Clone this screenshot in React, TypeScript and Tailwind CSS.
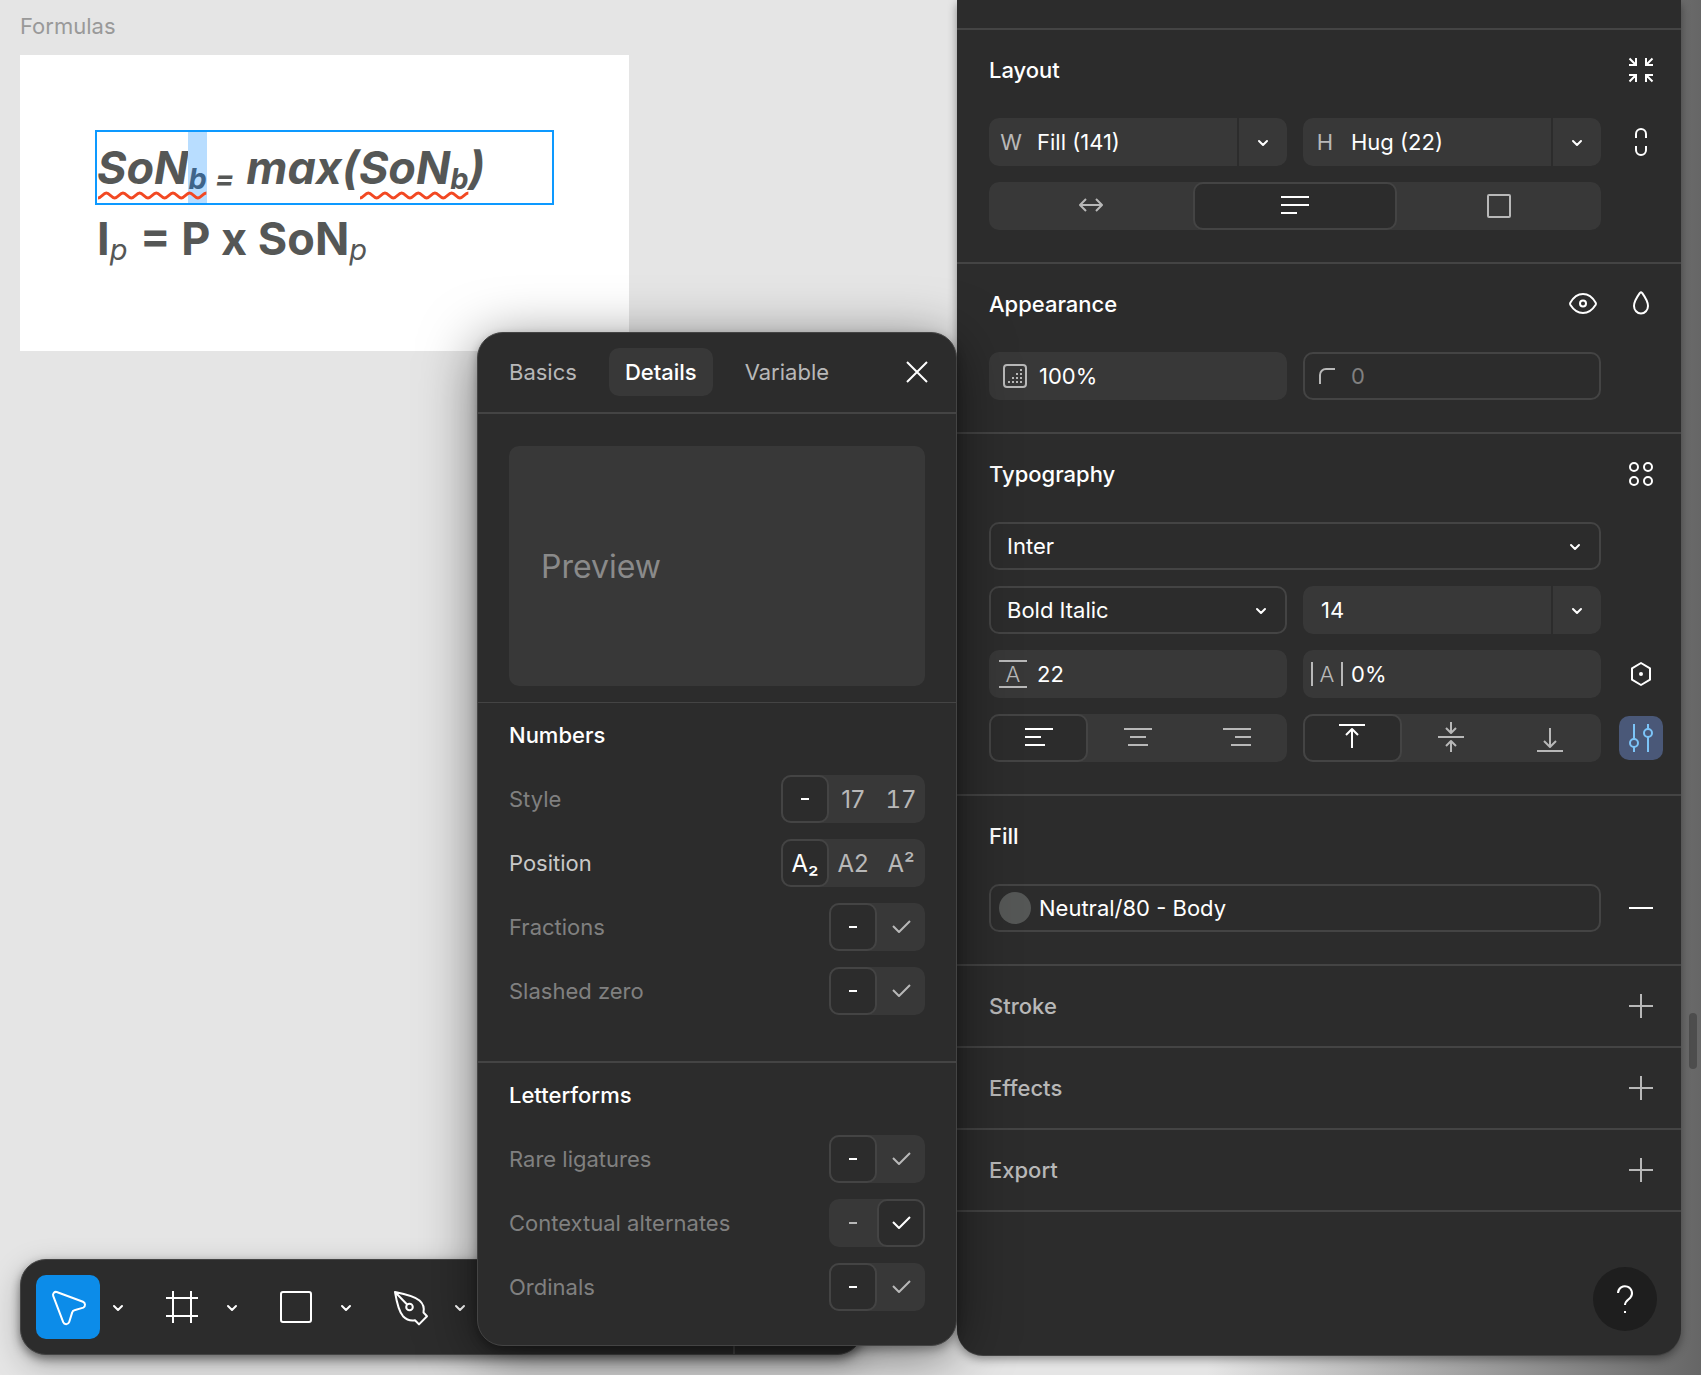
import React from "react";

type IconProps = { d?: string; children?: React.ReactNode; size?: number; className?: string };

function Icon({ d, children, size = 48, className = "" }: IconProps) {
  return (
    <svg
      width={size}
      height={size}
      viewBox={`0 0 ${size} ${size}`}
      fill="none"
      stroke="currentColor"
      strokeWidth={2}
      className={`shrink-0 ${className}`}
      aria-hidden="true"
    >
      {d && <path d={d} strokeLinejoin="round" />}
      {children}
    </svg>
  );
}

function Chevron({ className = "" }: { className?: string }) {
  return (
    <Icon size={16} className={className}>
      <path d="M4 7l4 4 4-4" strokeLinecap="round" strokeLinejoin="round" />
    </Icon>
  );
}

const CHECK = "M16 23l6 6 11-11";
const DASH = "M20 24h8";

/* ---------- Canvas ---------- */

function Squiggle() {
  return (
    <svg className="absolute left-0 top-[58px] h-2.5 w-full" viewBox="0 0 108 10" preserveAspectRatio="none" fill="none" aria-hidden="true">
      <path
        d="M1 8c3.200 0 5.100-5 8.200-5s5.100 5 8.200 5 5.100-5 8.200-5 5.100 5 8.200 5 5.100-5 8.200-5 5.100 5 8.200 5 5.100-5 8.200-5 5.100 5 8.200 5 5.100-5 8.200-5 5.100 5 8.200 5 5.100-5 8.200-5 5.100 5 8.200 5 5.100-5 8.300-5"
        stroke="#f24822"
        strokeWidth="3"
      />
    </svg>
  );
}

function Subscript({ children, selected = false }: { children: React.ReactNode; selected?: boolean }) {
  return (
    <span className={`flex h-full items-start text-[29px] ${selected ? "bg-[#b8ddff] text-[#3f658a]" : ""}`}>
      <span className="translate-y-[11px]">{children}</span>
    </span>
  );
}

function CanvasFrame() {
  return (
    <section className="w-[609px]">
      <h2 className="pb-3.5 pt-2.5 text-[22px] leading-[30px] text-[#999]">Formulas</h2>
      <div className="h-[296px] bg-white px-[77px] py-[77px] text-[45px] leading-[72px] text-[#555756]">
        <div className="flex h-[71px] whitespace-pre font-bold italic outline-2 outline-[#0d99ff]">
          <span className="relative flex">
            SoN<Subscript selected>b</Subscript>
            <Squiggle />
          </span>
          <span className="pl-2 pr-3">
            <Subscript>=</Subscript>
          </span>
          <span>max(</span>
          <span className="relative flex">
            SoN<Subscript>b</Subscript>
            <Squiggle />
          </span>
          )
        </div>
        <div className="flex h-[71px] whitespace-pre font-bold">
          I
          <span className="pr-0.5 font-normal italic">
            <Subscript>p</Subscript>
          </span>
          {" = P x SoN"}
          <span className="font-normal italic">
            <Subscript>p</Subscript>
          </span>
        </div>
      </div>
    </section>
  );
}

/* ---------- Toolbar ---------- */

function Tool({ label, active = false, children }: { label: string; active?: boolean; children: React.ReactNode }) {
  return (
    <div className="flex items-center">
      <button
        type="button"
        aria-label={label}
        className={`grid size-16 place-items-center rounded-[10px] ${active ? "bg-[#0c8ce9]" : ""}`}
      >
        {children}
      </button>
      <button type="button" aria-label={`${label} options`} className="grid h-16 w-9 place-items-center">
        <Chevron />
      </button>
    </div>
  );
}

function Toolbar() {
  return (
    <nav
      aria-label="Tools"
      className="absolute bottom-5 left-5 flex h-24 w-[843px] items-center gap-3.5 rounded-[26px] border border-[#444] bg-[#2c2c2c] px-[15px] text-white shadow-[0_4px_10px_rgba(0,0,0,0.45),0_10px_30px_rgba(0,0,0,0.25)]"
    >
      <Tool label="Move" active>
        <Icon
          size={64}
          d="M20.7 17L47 26.8a3.2 3.2 0 0 1 .3 5.8L38.4 35.2a3 3 0 0 0-2.2 2.2L33.2 47a3.2 3.2 0 0 1-6 .2L17.2 20.8a2.9 2.9 0 0 1 3.5-3.8z"
        />
      </Tool>
      <Tool label="Frame">
        <Icon d="M8 15h32M8 33h32M15 8v32M33 8v32" />
      </Tool>
      <Tool label="Rectangle">
        <Icon>
          <rect x="9" y="9" width="30" height="30" rx="2" />
        </Icon>
      </Tool>
      <Tool label="Pen">
        <Icon d="M9 9C19 11 28.500 13 33.500 17.500c4 3.500 5 7 4 12l3.500 3.700-8 8.200-4-4.200c-5 1-8.500-.5-12-4C12.500 28 10.500 18 9 9zM9.500 9.500L21.300 21.700">
          <circle cx="23.500" cy="24" r="3.300" />
        </Icon>
      </Tool>
      <div className="h-[94px] grow border-r-2 border-[#444]" />
      <div className="w-[98px]" />
    </nav>
  );
}

/* ---------- Type settings popup ---------- */

type Option = { label: string; content: React.ReactNode };

function Segments({ label, options, active }: { label: string; options: Option[]; active: number }) {
  return (
    <div role="group" aria-label={label} className="flex rounded-[10px] bg-[#383838]">
      {options.map((option, index) => (
        <button
          key={option.label}
          type="button"
          aria-label={option.label}
          aria-pressed={index === active}
          className={`flex size-12 items-center justify-center rounded-[10px] text-2xl ${
            index === active ? "border-2 border-[#444] bg-[#2c2c2c] text-white" : "text-[#b8b8b8]"
          }`}
        >
          {option.content}
        </button>
      ))}
    </div>
  );
}

const TOGGLE: Option[] = [
  { label: "Off", content: <Icon d={DASH} /> },
  { label: "On", content: <Icon d={CHECK} /> },
];

function DetailRow({
  label,
  options = TOGGLE,
  active = 0,
  strong = false,
}: {
  label: string;
  options?: Option[];
  active?: number;
  strong?: boolean;
}) {
  return (
    <div className="flex h-16 items-center justify-between">
      <span className={strong ? "text-[#c8c8c8]" : "text-[#808080]"}>{label}</span>
      <Segments label={label} options={options} active={active} />
    </div>
  );
}

function TypeSettings() {
  return (
    <section
      aria-label="Type settings"
      className="absolute right-0 top-[332px] z-20 w-[480px] rounded-[26px] border border-[#444] bg-[#2c2c2c] pb-[26px] text-[22px] shadow-[0_4px_10px_rgba(0,0,0,0.3),0_10px_56px_rgba(0,0,0,0.5)]"
    >
      <header className="flex h-[81px] items-center justify-between border-b-2 border-[#444] px-[15px] pb-px">
        <div role="tablist" className="flex gap-4">
          <button type="button" role="tab" aria-selected="false" className="h-12 rounded-[10px] px-4 text-[#b8b8b8]">
            Basics
          </button>
          <button type="button" role="tab" aria-selected="true" className="h-12 rounded-[10px] bg-[#383838] px-4 font-medium text-white">
            Details
          </button>
          <button type="button" role="tab" aria-selected="false" className="h-12 rounded-[10px] px-4 text-[#b8b8b8]">
            Variable
          </button>
        </div>
        <button type="button" aria-label="Close" className="text-white">
          <Icon d="M14 14l20 20M34 14L14 34" />
        </button>
      </header>
      <div className="border-b border-[#444] px-[31px] pb-4 pt-8">
        <div className="flex h-60 items-center rounded-[10px] bg-[#383838] px-8 pt-0.5 text-[32px] text-[#8a8a8a]">Preview</div>
      </div>
      <div className="border-b-2 border-[#444] px-[31px] pb-[38px]">
        <h3 className="font-medium leading-[64px] text-white">Numbers</h3>
        <DetailRow
          label="Style"
          options={[
            { label: "Default", content: <Icon d={DASH} /> },
            { label: "Proportional", content: <span className="pt-0.5">17</span> },
            { label: "Monospaced", content: <span className="pt-0.5 tabular-nums">17</span> },
          ]}
        />
        <DetailRow
          label="Position"
          strong
          options={[
            { label: "Subscript", content: <span className="pt-0.5">A₂</span> },
            { label: "Normal", content: <span className="pt-0.5">A2</span> },
            { label: "Superscript", content: <span className="pt-0.5">A²</span> },
          ]}
        />
        <DetailRow label="Fractions" />
        <DetailRow label="Slashed zero" />
      </div>
      <div className="px-[31px]">
        <h3 className="font-medium leading-[64px] text-white">Letterforms</h3>
        <DetailRow label="Rare ligatures" />
        <DetailRow label="Contextual alternates" active={1} />
        <DetailRow label="Ordinals" />
      </div>
    </section>
  );
}

/* ---------- Properties panel ---------- */

function IconButton({ label, muted = false, children }: { label: string; muted?: boolean; children: React.ReactNode }) {
  return (
    <button type="button" aria-label={label} className={`grid size-12 place-items-center ${muted ? "text-[#b8b8b8]" : "text-white"}`}>
      {children}
    </button>
  );
}

function Section({ title, actions, children }: { title: string; actions?: React.ReactNode; children?: React.ReactNode }) {
  return (
    <section className={`border-b-2 border-[#444] pl-8 pr-4 ${children ? "pb-6" : ""}`}>
      <header className="flex h-20 items-center justify-between">
        <h2 className={`font-medium ${children ? "text-white" : "text-[#b8b8b8]"}`}>{title}</h2>
        <div className="flex gap-2.5">{actions}</div>
      </header>
      {children}
    </section>
  );
}

function Row({ action, children }: { action?: React.ReactNode; children: React.ReactNode }) {
  return (
    <div className="grid h-16 grid-cols-[1fr_48px] items-center gap-4">
      <div className="grid auto-cols-fr grid-flow-col gap-4">{children}</div>
      <div className="grid place-items-center">{action}</div>
    </div>
  );
}

function Field({
  label,
  prefix,
  value = "",
  placeholder,
  menu = false,
  outlined = false,
}: {
  label: string;
  prefix?: React.ReactNode;
  value?: string;
  placeholder?: string;
  menu?: boolean;
  outlined?: boolean;
}) {
  return (
    <div className={`flex h-12 min-w-0 gap-0.5 overflow-hidden rounded-[10px] ${outlined ? "border-2 border-[#444]" : ""}`}>
      <label className={`flex min-w-0 flex-1 items-center ${outlined ? "" : "bg-[#383838]"} ${prefix ? "" : "pl-[18px]"}`}>
        {prefix}
        <input
          aria-label={label}
          defaultValue={value}
          placeholder={placeholder}
          className="w-full min-w-0 flex-1 bg-transparent text-white outline-none placeholder:text-[#808080]"
        />
      </label>
      {menu && (
        <button type="button" aria-label={`${label} options`} className="grid w-12 shrink-0 place-items-center bg-[#383838] text-white">
          <Chevron />
        </button>
      )}
    </div>
  );
}

function Select({ label, value }: { label: string; value: string }) {
  return (
    <div className="relative min-w-0">
      <select aria-label={label} className="h-12 w-full appearance-none rounded-[10px] border-2 border-[#444] bg-transparent px-4 text-white">
        <option>{value}</option>
      </select>
      <Chevron className="pointer-events-none absolute right-[18px] top-4 text-white" />
    </div>
  );
}

function IconSegments({ label, active, items }: { label: string; active: number; items: { label: string; icon: React.ReactNode }[] }) {
  return (
    <div role="group" aria-label={label} className="grid h-12 auto-cols-fr grid-flow-col rounded-[10px] bg-[#383838]">
      {items.map((item, index) => (
        <button
          key={item.label}
          type="button"
          aria-label={item.label}
          aria-pressed={index === active}
          className={`flex h-12 items-center justify-center rounded-[10px] ${
            index === active ? "border-2 border-[#444] bg-[#2c2c2c] text-white" : "text-[#b8b8b8]"
          }`}
        >
          {item.icon}
        </button>
      ))}
    </div>
  );
}

const OPACITY_DOTS = [
  [18, 6],
  [14, 10], [18, 10],
  [10, 14], [14, 14], [18, 14],
  [6, 18], [10, 18], [14, 18], [18, 18],
];

const PLUS = "M12 24h24M24 12v24";

function PropertiesPanel() {
  return (
    <aside className="relative z-10 mb-5 w-[724px] shrink-0 rounded-b-[26px] bg-[#2c2c2c] text-[22px] shadow-[0_1px_0_#444,0_4px_10px_rgba(0,0,0,0.4)]">
      <div className="h-[30px] border-b-2 border-[#444]" />
      <Section
        title="Layout"
        actions={
          <IconButton label="Resize to fit">
            <Icon d="M12.500 12.500L19 19M20 19h-8M19 12v8M35.500 12.500L29 19M28 19h8M29 12v8M12.500 35.500L19 29M20 29h-8M19 36v-8M35.500 35.500L29 29M28 29h8M29 36v-8" />
          </IconButton>
        }
      >
        <Row
          action={
            <IconButton label="Lock aspect ratio">
              <Icon d="M19 20v-4a5 5 0 0 1 10 0v4M19 28v4a5 5 0 0 0 10 0v-4" />
            </IconButton>
          }
        >
          <Field label="Width" menu value="Fill (141)" prefix={<span className="w-12 shrink-0 pr-1 text-center text-[#b8b8b8]">W</span>} />
          <Field label="Height" menu value="Hug (22)" prefix={<span className="w-12 shrink-0 pr-1 text-center text-[#b8b8b8]">H</span>} />
        </Row>
        <Row>
          <IconSegments
            label="Text resizing"
            active={1}
            items={[
              { label: "Auto width", icon: <Icon d="M13 23h22M19 17l-6 6 6 6M29 17l6 6-6 6" /> },
              { label: "Auto height", icon: <Icon d="M10 15h28M10 23h28M10 31h16" /> },
              {
                label: "Fixed size",
                icon: (
                  <Icon>
                    <rect x="13" y="13" width="22" height="22" rx="1" />
                  </Icon>
                ),
              },
            ]}
          />
        </Row>
      </Section>

      <Section
        title="Appearance"
        actions={
          <>
            <IconButton label="Visibility">
              <Icon d="M11.300 22.700C14 18 18.700 14 24 14s10 4 12.700 8.700q.5 1 0 2C34 29 29.300 33 24 33s-10-4-12.700-8.300q-.5-1 0-2z">
                <circle cx="24" cy="23.500" r="3" />
              </Icon>
            </IconButton>
            <IconButton label="Blend mode">
              <Icon d="M23 12.800C20.500 16.300 17 21 17 26a7 7.500 0 0 0 14 0c0-5-3.500-9.700-6-13.200q-1-1.200-2 0z" />
            </IconButton>
          </>
        }
      >
        <Row>
          <Field
            label="Opacity"
            value="100%"
            prefix={
              <span className="flex w-[50px] shrink-0 pl-3.5 text-[#b8b8b8]">
                <Icon size={24}>
                  <rect x="1" y="1" width="22" height="22" rx="3" />
                  {OPACITY_DOTS.map(([x, y]) => (
                    <rect key={`${x}-${y}`} x={x - 1} y={y - 1} width="2" height="2" fill="currentColor" stroke="none" />
                  ))}
                </Icon>
              </span>
            }
          />
          <Field
            label="Corner radius"
            placeholder="0"
            outlined
            prefix={
              <span className="flex w-[46px] shrink-0 pl-3.5 text-[#b8b8b8]">
                <Icon size={16} d="M1 16V7a6 6 0 0 1 6-6h9" />
              </span>
            }
          />
        </Row>
      </Section>

      <Section
        title="Typography"
        actions={
          <IconButton label="Text styles">
            <Icon>
              <circle cx="17" cy="17" r="4" />
              <circle cx="31" cy="17" r="4" />
              <circle cx="17" cy="31" r="4" />
              <circle cx="31" cy="31" r="4" />
            </Icon>
          </IconButton>
        }
      >
        <Row>
          <Select label="Font family" value="Inter" />
        </Row>
        <Row>
          <Select label="Font style" value="Bold Italic" />
          <Field label="Font size" value="14" menu />
        </Row>
        <Row
          action={
            <IconButton label="Apply variable">
              <Icon d="M24 13l9 5.300v11.400L24 35l-9-5.300V18.300z">
                <circle cx="24" cy="24" r="2" fill="currentColor" stroke="none" />
              </Icon>
            </IconButton>
          }
        >
          <Field
            label="Line height"
            value="22"
            prefix={
              <span className="flex w-12 shrink-0 justify-center text-[#b8b8b8]">
                <span className="w-7 border-y-2 border-[#b8b8b8] text-center text-[22px] font-light leading-6">A</span>
              </span>
            }
          />
          <Field
            label="Letter spacing"
            value="0%"
            prefix={
              <span className="flex w-12 shrink-0 justify-center text-[#b8b8b8]">
                <span className="w-8 border-x-2 border-[#b8b8b8] text-center text-[22px] font-light leading-6">A</span>
              </span>
            }
          />
        </Row>
        <Row
          action={
            <button type="button" aria-label="Type settings" className="rounded-[10px] bg-[#4a5878] text-[#7cc4f8]">
              <Icon size={44} d="M15 8v15M15 31v5M29 8v5M29 21v15">
                <circle cx="15" cy="27" r="4" />
                <circle cx="29" cy="17" r="4" />
              </Icon>
            </button>
          }
        >
          <IconSegments
            label="Horizontal alignment"
            active={0}
            items={[
              { label: "Align left", icon: <Icon d="M10 15h28M10 23h16M10 31h20" /> },
              { label: "Align center", icon: <Icon d="M10 15h28M16 23h16M14 31h20" /> },
              { label: "Align right", icon: <Icon d="M10 15h28M22 23h16M18 31h20" /> },
            ]}
          />
          <IconSegments
            label="Vertical alignment"
            active={0}
            items={[
              { label: "Align top", icon: <Icon d="M10 11h26M23 15v19M17 21l6-6 6 6" /> },
              { label: "Align middle", icon: <Icon d="M10 23h26M23 8v11M18 14l5 5 5-5M23 38V27M18 32l5-5 5 5" /> },
              { label: "Align bottom", icon: <Icon d="M10 37h26M23 14v19M17 27l6 6 6-6" /> },
            ]}
          />
        </Row>
      </Section>

      <Section title="Fill">
        <Row
          action={
            <IconButton label="Remove fill">
              <Icon d="M12 24h24" />
            </IconButton>
          }
        >
          <button type="button" className="flex h-12 items-center gap-2 rounded-[10px] border-2 border-[#444] px-2 text-white">
            <span className="size-8 rounded-full bg-[#555756]" />
            Neutral/80 - Body
          </button>
        </Row>
      </Section>

      {["Stroke", "Effects", "Export"].map((title) => (
        <Section
          key={title}
          title={title}
          actions={
            <IconButton label={`Add ${title.toLowerCase()}`} muted>
              <Icon d={PLUS} />
            </IconButton>
          }
        />
      ))}

      <button
        type="button"
        aria-label="Help"
        className="absolute bottom-6 right-6 grid size-16 place-items-center rounded-full bg-[#1e1e1e] text-white"
      >
        <Icon d="M17 18a7 7 0 1 1 12.500 4.500c-2 2.200-5.500 3.500-5.500 7.500">
          <path d="M23 37h2" strokeWidth="2" />
        </Icon>
      </button>
    </aside>
  );
}

export default function App() {
  return (
    <div className="flex min-h-screen bg-[linear-gradient(to_right,#e5e5e5_71%,#b7b7b7_81%,#666_100%)] font-['Inter',sans-serif] leading-none">
      <main className="relative min-w-0 flex-1 pl-5">
        <div className="pt-px">
          <CanvasFrame />
        </div>
        <Toolbar />
        <TypeSettings />
      </main>
      <PropertiesPanel />
      <div className="relative w-5 shrink-0">
        <div className="absolute right-1 top-[1013px] h-14 w-2 rounded-full bg-[#4d4d4d]" />
      </div>
    </div>
  );
}
